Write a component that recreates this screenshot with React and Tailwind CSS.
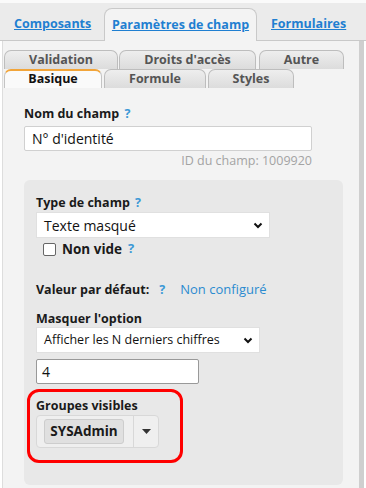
import React from "react";

const font = { fontFamily: '"Open Sans", "Noto Sans", sans-serif' };

function Help({ className = "" }) {
  return <span className={`text-[#3b98d6] font-bold ${className}`}>?</span>;
}

function SubTab({ label, width, active }) {
  return (
    <div
      className={`h-[19px] flex items-center justify-center rounded-t-[7px] border border-b-0 text-[12.5px] font-bold leading-none ${
        active
          ? "bg-[#fafafa] border-[#c4c4c4] border-t-2 border-t-[#f2a53a] text-[#111]"
          : "bg-gradient-to-b from-[#eeeeee] to-[#dcdcdc] border-[#bdbdbd] text-[#555]"
      } ${width}`}
    >
      {label}
    </div>
  );
}

function Chevron() {
  return (
    <svg width="10" height="7" viewBox="0 0 10 7" className="shrink-0">
      <path d="M1.5 1.5 L5 5 L8.5 1.5" fill="none" stroke="#111" strokeWidth="2" />
    </svg>
  );
}

export default function App() {
  return (
    <div className="w-[366px] h-[488px] overflow-hidden bg-white" style={font}>
      {/* top tabs */}
      <div className="h-[41px] bg-[#ebebeb] border-t-[3px] border-t-[#fafafa] border-b border-[#c9c9c9] flex items-end">
        <div className="w-[104px] h-[32px] flex items-center pl-[14px]">
          <span className="text-[12.5px] font-bold text-[#1f7fd1] underline">Composants</span>
        </div>
        <div className="w-[153px] h-[33px] -mb-px bg-[#f3f3f3] border border-b-0 border-[#c9c9c9] rounded-t-[8px] flex items-center justify-center">
          <span className="text-[12.5px] font-bold text-[#1f7fd1] underline">Paramètres de champ</span>
        </div>
        <div className="h-[32px] flex items-center pl-[14px]">
          <span className="text-[12.5px] font-bold text-[#1f7fd1] underline">Formulaires</span>
        </div>
      </div>

      <div className="flex h-[447px]">
        <div className="w-[357px] bg-[#f3f3f3] border-l border-[#dddddd] ml-[2px]">
          {/* sub tabs */}
          <div className="pt-[9px] pl-px">
            <div className="flex gap-[1px]">
              <SubTab label="Validation" width="w-[114px]" />
              <SubTab label="Droits d'accès" width="w-[137px]" />
              <div className="w-px" />
              <SubTab label="Autre" width="w-[85px]" />
            </div>
            <div className="flex gap-[2px]">
              <SubTab label="Basique" width="w-[98px]" active />
              <SubTab label="Formule" width="w-[102px]" />
              <SubTab label="Styles" width="w-[86px]" />
            </div>
          </div>

          {/* content */}
          <div className="pl-[21px] pr-[14px] pt-[17px]">
            <div className="text-[12.5px] font-bold text-[#1a1a1a] leading-[18px] mb-[3px]">
              Nom du champ <Help className="ml-[2px]" />
            </div>
            <div className="w-[288px] h-[25px] bg-white border border-[#d0d0d0] rounded-[2px] flex items-center pl-[7px] text-[14px] text-[#111]">
              N° d'identité
            </div>
            <div className="w-[288px] text-right text-[12.5px] text-[#a3a3a3] leading-[16px] mt-[2px]">
              ID du champ: 1009920
            </div>

            <div className="mt-[11px] w-[319px] bg-[#e8e8e8] rounded-[6px] pl-[12px] pt-[14px] pb-[22px]">
              <div className="text-[12.5px] font-bold text-[#1a1a1a] leading-[18px]">
                Type de champ <Help className="ml-[2px]" />
              </div>
              <div className="w-[234px] h-[26px] bg-white border border-[#e0e0e0] flex items-center justify-between pl-[7px] pr-[6px] text-[14px] text-[#111]">
                <span>Texte masqué</span>
                <Chevron />
              </div>
              <div className="mt-[2px] h-[18px] flex items-center pl-[7px]">
                <div className="w-[13px] h-[13px] bg-white border border-[#666] rounded-[2px]" />
                <span className="ml-[6px] text-[13.5px] font-bold text-[#1a1a1a]">Non vide</span>
                <Help className="ml-[6px] text-[13px]" />
              </div>

              <div className="mt-[23px] h-[18px] flex items-center text-[12.5px]">
                <span className="font-bold text-[#1a1a1a]">Valeur par défaut:</span>
                <Help className="ml-[10px]" />
                <span className="ml-[15px] text-[13px] text-[#2b8bd0]">Non configuré</span>
              </div>

              <div className="mt-[11px] text-[12.5px] font-bold text-[#1a1a1a] leading-[17px]">
                Masquer l'option
              </div>
              <div className="w-[224px] h-[26px] bg-white border border-[#e0e0e0] flex items-center justify-between pl-[7px] pr-[6px] text-[12.5px] text-[#111]">
                <span>Afficher les N derniers chiffres</span>
                <Chevron />
              </div>
              <div className="mt-[6px] w-[163px] h-[25px] bg-white border border-[#999] rounded-[2px] flex items-center pl-[5px] text-[14px] text-[#111]">
                4
              </div>

              <div className="mt-[5px] -ml-[9px] w-[156px] border-[3px] border-[#ff0000] rounded-[12px] pl-[6px] pt-[5px] pb-[12px]">
                <div className="text-[12.5px] font-bold text-[#1a1a1a] leading-[18px]">Groupes visibles</div>
                <div className="w-[123px] h-[33px] bg-[#efefef] border border-[#d8d8d8] rounded-[4px] flex items-center">
                  <div className="ml-[7px] w-[80px] h-[25px] bg-[#e0e0e0] border border-[#cdcdcd] rounded-[3px] flex items-center justify-center text-[13.5px] font-bold text-[#1a1a1a]">
                    SYSAdmin
                  </div>
                  <div className="ml-[9px] w-px self-stretch bg-[#d8d8d8]" />
                  <div className="flex-1 flex items-center justify-center">
                    <svg width="9" height="5" viewBox="0 0 9 5">
                      <path d="M0 0 L9 0 L4.5 5 Z" fill="#333" />
                    </svg>
                  </div>
                </div>
              </div>
            </div>
          </div>
        </div>
        <div className="w-[5px] bg-[#cfcfcf]" />
        <div className="flex-1 bg-white" />
      </div>
    </div>
  );
}
